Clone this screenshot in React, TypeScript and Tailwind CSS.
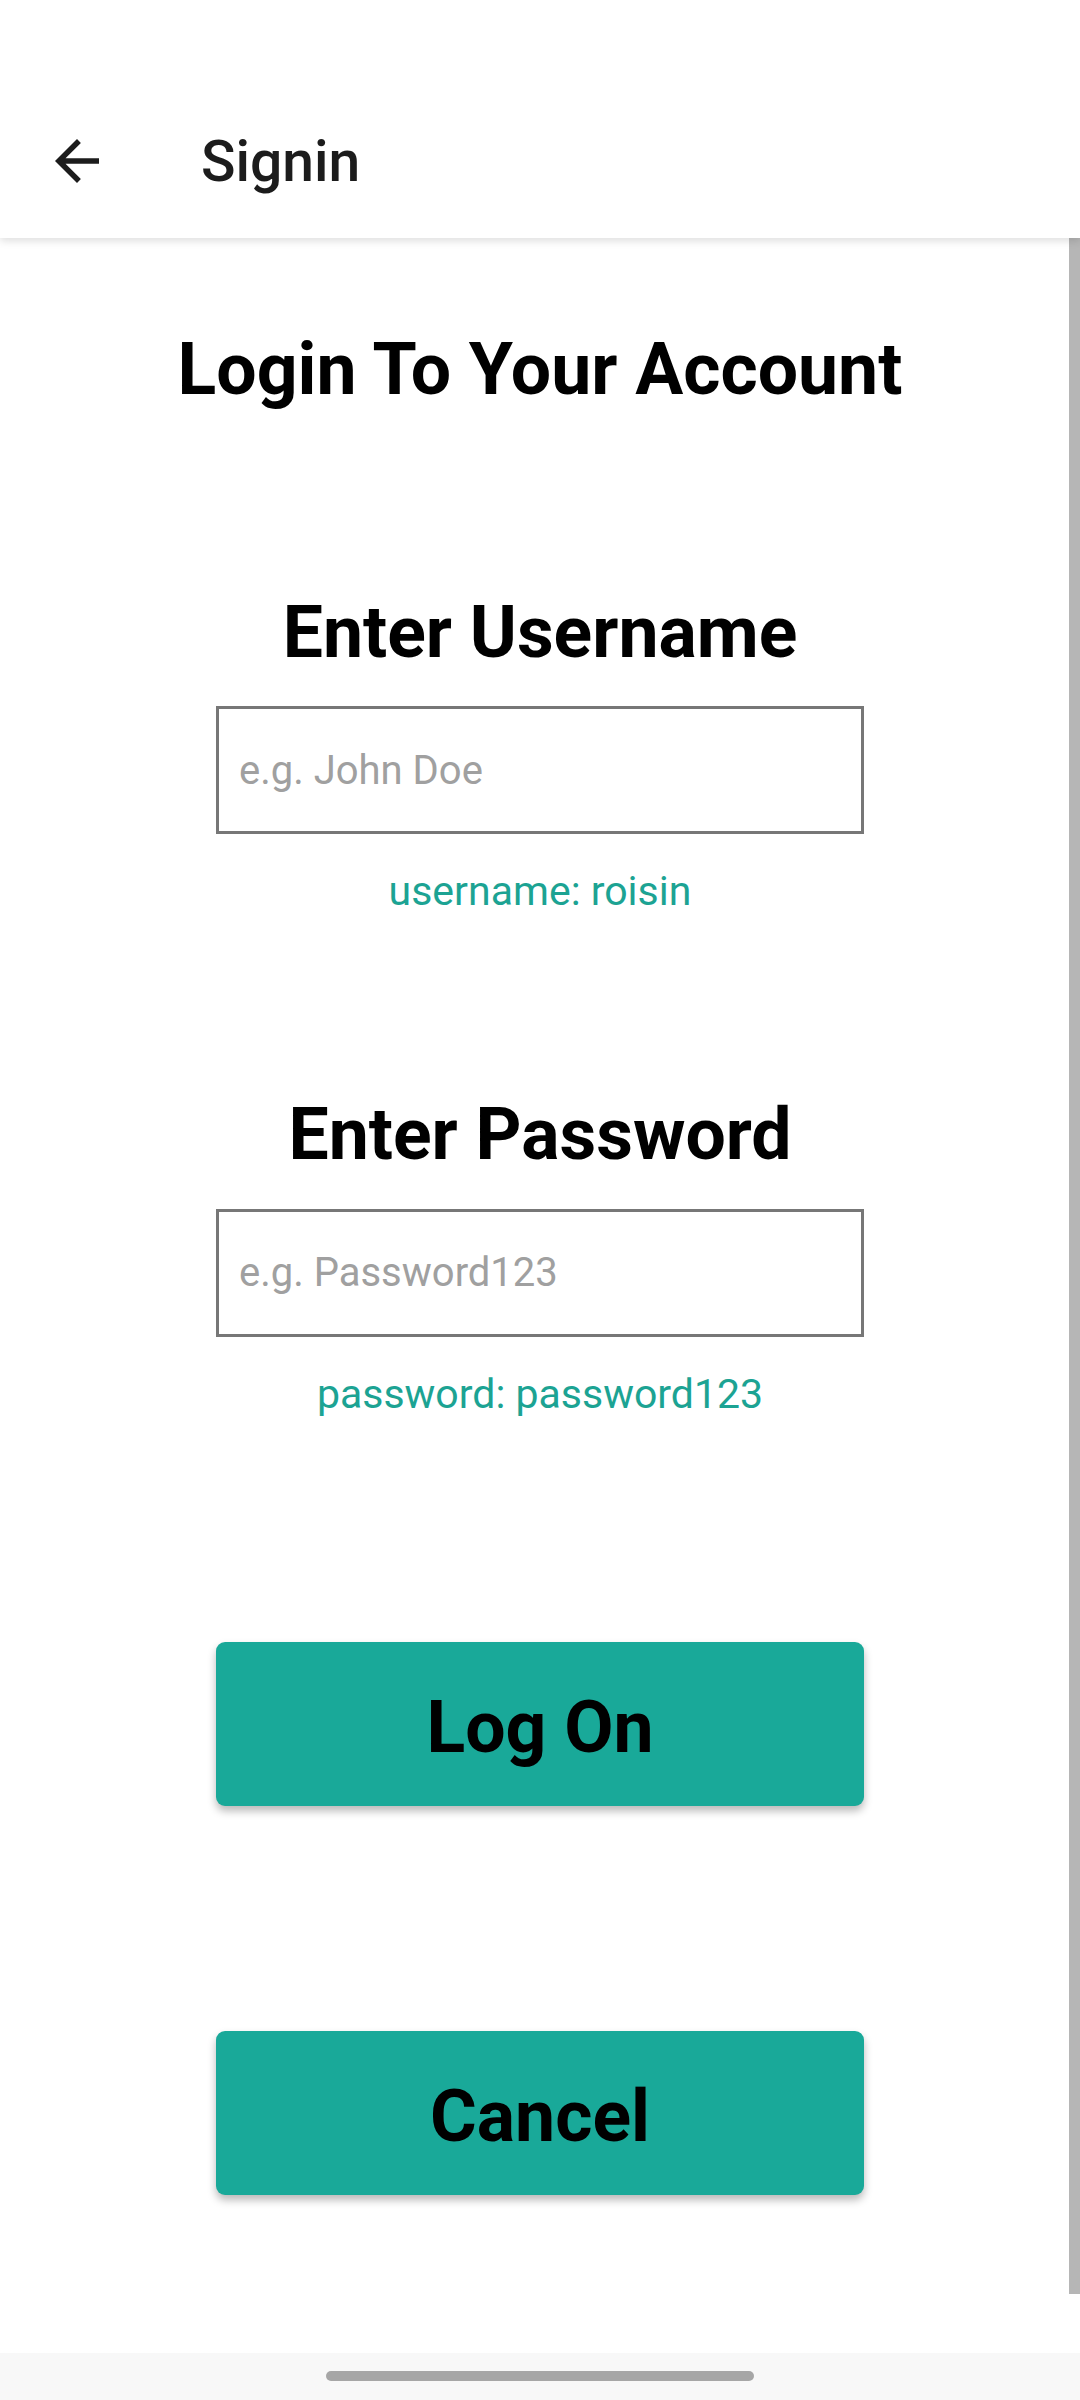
import React from "react";

const BackArrow = () => (
  <svg viewBox="0 0 24 24" className="w-[66px] h-[66px]" fill="#1c1c1c">
    <path d="M20 11H7.83l5.59-5.59L12 4l-8 8 8 8 1.41-1.41L7.83 13H20v-2z" />
  </svg>
);

interface FieldProps {
  label: string;
  placeholder: string;
  hint: string;
  type?: string;
}

const Field: React.FC<FieldProps> = ({ label, placeholder, hint, type = "text" }) => (
  <div className="flex flex-col items-center">
    <h2 className="text-[71.5px] leading-none font-bold text-black">{label}</h2>
    <input
      type={type}
      placeholder={placeholder}
      className="mt-[38px] w-[648px] h-[128px] border-[3px] border-[#777777] bg-white pl-[20px] text-[40px] text-black placeholder:text-[#a0a0a0] outline-none"
    />
    <p className="mt-[37px] text-[41px] leading-none text-[#1ca393]">{hint}</p>
  </div>
);

const ActionButton: React.FC<{ label: string }> = ({ label }) => (
  <button className="w-[648px] h-[164px] rounded-[9px] bg-[#19a999] flex items-center justify-center pt-[9px] shadow-[0_5px_9px_rgba(0,0,0,0.28)]">
    <span className="text-[71.5px] leading-none font-bold text-black">{label}</span>
  </button>
);

export default function App() {
  return (
    <div
      className="relative w-[1080px] h-[2400px] bg-white flex flex-col overflow-hidden"
      style={{ fontFamily: "Roboto, 'Noto Sans', sans-serif" }}
    >
      {/* toolbar */}
      <header className="relative z-10 h-[238px] bg-white flex items-end shadow-[0_3px_8px_rgba(0,0,0,0.13)]">
        <div className="h-[154px] w-full flex items-center">
          <button className="ml-[44px] w-[66px] h-[66px] flex items-center justify-center">
            <BackArrow />
          </button>
          <span className="ml-[91px] text-[57px] leading-none font-medium text-[#1c1c1c]">Signin</span>
        </div>
      </header>

      {/* content */}
      <main className="flex-1 flex flex-col items-center">
        <h1 className="mt-[96px] text-[71.5px] leading-none font-bold text-black">
          Login To Your Account
        </h1>
        <div className="mt-[191px]">
          <Field label="Enter Username" placeholder="e.g. John Doe" hint="username: roisin" />
        </div>
        <div className="mt-[187px]">
          <Field label="Enter Password" placeholder="e.g. Password123" hint="password: password123" type="password" />
        </div>
        <div className="mt-[227px]">
          <ActionButton label="Log On" />
        </div>
        <div className="mt-[225px]">
          <ActionButton label="Cancel" />
        </div>
      </main>

      {/* scrollbar */}
      <div className="absolute right-0 top-[238px] w-[11px] h-[2056px] bg-[#b6b6b6]" />

      {/* nav bar */}
      <div className="h-[47px] bg-[#f8f8f8] flex justify-center pt-[18px]">
        <div className="w-[428px] h-[10px] rounded-full bg-[#a6a6a6]" />
      </div>
    </div>
  );
}
